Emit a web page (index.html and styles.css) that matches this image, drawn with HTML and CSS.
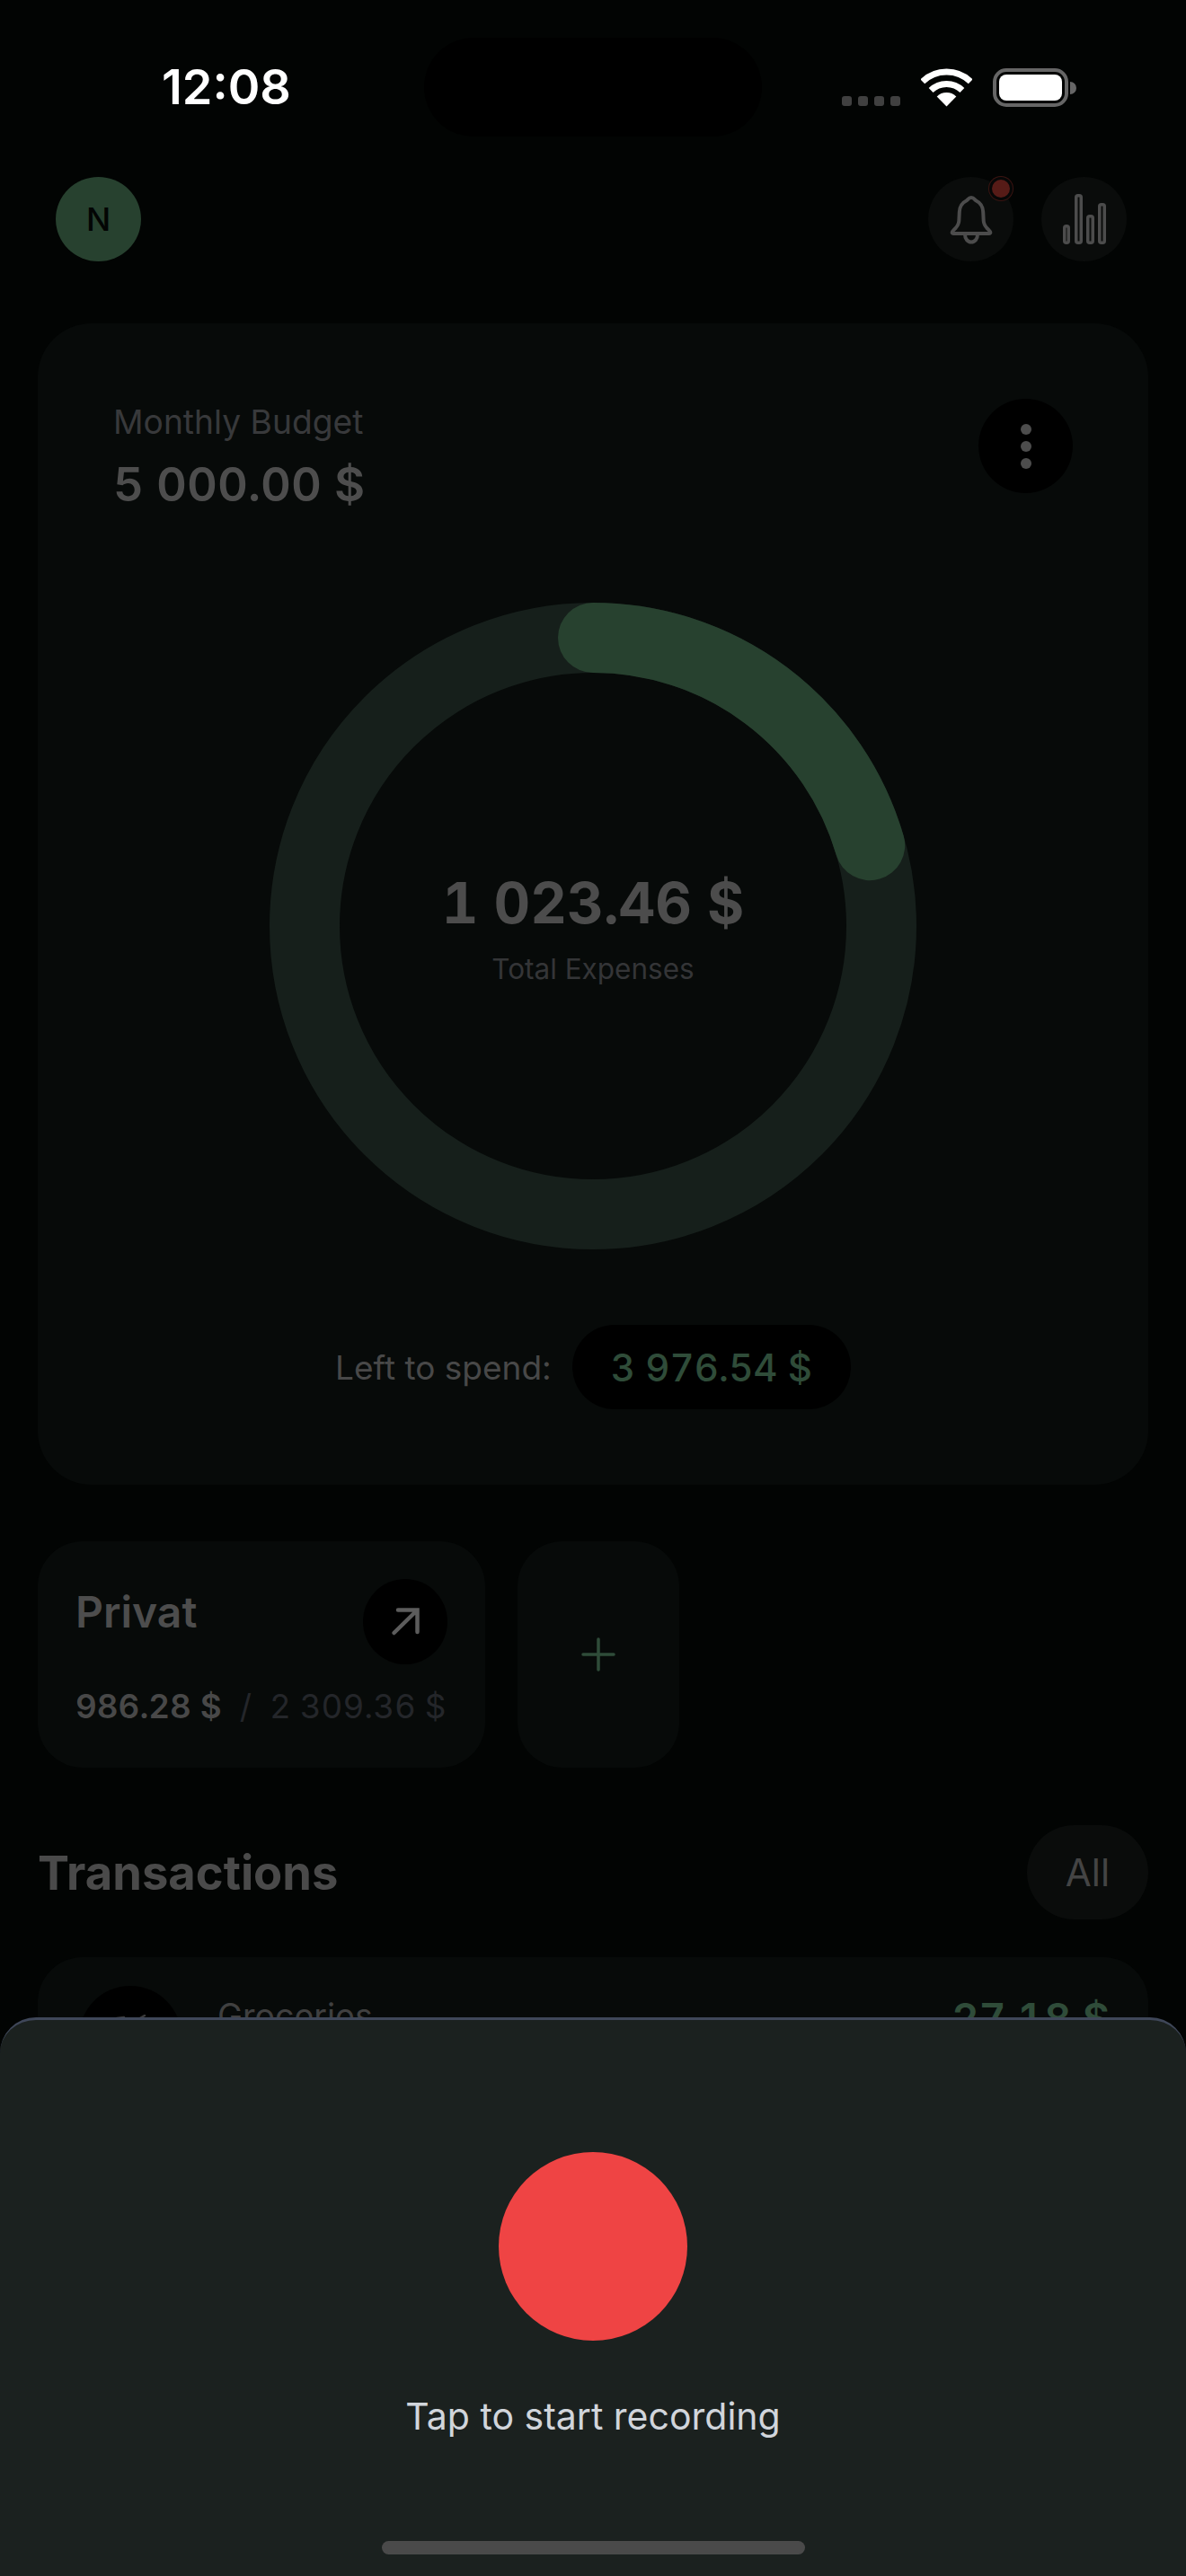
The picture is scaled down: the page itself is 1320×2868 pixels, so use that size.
FILE: index.html
```html
<!DOCTYPE html>
<html lang="en">
<head>
    <meta charset="UTF-8">
    <meta name="viewport" content="width=device-width, initial-scale=1.0">
    <title>Budget</title>
    <link rel="stylesheet" href="styles.css">
</head>
<body>
    <div class="phone">

        <div class="statusbar">
            <span class="time">12:08</span>
            <div class="island"></div>
            <div class="status-icons">
                <div class="signal"><i></i><i></i><i></i><i></i></div>
                <svg class="wifi" width="57" height="43" viewBox="0 0 57 43" fill="none" stroke="#fff" stroke-width="7">
                    <path d="M1.8 14.8A38.5 38.5 0 0 1 55.2 14.8"/>
                    <path d="M11.1 24.5A25 25 0 0 1 45.9 24.5"/>
                    <path d="M28.5 42.5L17.7 31.4A15.5 15.5 0 0 1 39.3 31.4Z" fill="#fff" stroke="none"/>
                </svg>
                <div class="battery"><div class="battery-fill"></div></div>
                <div class="battery-cap"></div>
            </div>
        </div>

        <div class="topbar">
            <div class="avatar">N</div>
            <div class="top-actions">
                <div class="round-btn">
                    <svg width="50" height="58" viewBox="0 0 50 58" fill="none" stroke="#4c4c4c" stroke-width="4" stroke-linejoin="round" stroke-linecap="round">
                        <path d="M25 5C22 5 21.500 7 19.500 8.500C14.500 11 12 15.500 11.800 21L11.300 31C11 37 7 39 4 43C3.300 44.300 4 45 5.500 45H44.500C46 45 46.700 44.300 46 43C43 39 39 37 38.700 31L38.200 21C38 15.500 35.500 11 30.500 8.500C28.500 7 28 5 25 5Z"/>
                        <path d="M18 46C18 51 21 54.500 25 54.500C29 54.500 32 51 32 46"/>
                    </svg>
                    <span class="badge"></span>
                </div>
                <div class="round-btn">
                    <svg width="50" height="57" viewBox="0 0 50 57" fill="none" stroke="#4c4c4c" stroke-width="3.500">
                        <rect x="2.750" y="35.750" width="4.500" height="18.500" rx="2"/>
                        <rect x="15.750" y="1.750" width="5.500" height="52.500" rx="2"/>
                        <rect x="28.750" y="24.750" width="5.500" height="29.500" rx="2"/>
                        <rect x="41.750" y="11.750" width="5.500" height="42.500" rx="2"/>
                    </svg>
                </div>
            </div>
        </div>

        <div class="content">
            <div class="budget-card">
                <div class="budget-head">
                    <div class="budget-info">
                        <div class="budget-label">Monthly Budget</div>
                        <div class="budget-value">5 000.00 $</div>
                    </div>
                    <div class="menu-btn"><i></i><i></i><i></i></div>
                </div>

                <div class="ring">
                    <svg width="720" height="720" viewBox="0 0 720 720" fill="none" stroke-width="78">
                        <circle cx="360" cy="360" r="321" stroke="#161f1b"/>
                        <circle class="ring-progress" cx="360" cy="360" r="321" stroke="#27412f" stroke-linecap="round" stroke-dasharray="413 2017"/>
                    </svg>
                    <div class="ring-center">
                        <div class="ring-value">1 023.46 $</div>
                        <div class="ring-label">Total Expenses</div>
                    </div>
                </div>

                <div class="left-row">
                    <span class="left-label">Left to spend:</span>
                    <span class="left-pill">3 976.54 $</span>
                </div>
            </div>

            <div class="accounts">
                <div class="account-card">
                    <div class="account-head">
                        <span class="account-name">Privat</span>
                        <div class="arrow-btn">
                            <svg width="34" height="34" viewBox="0 0 34 34" fill="none" stroke="#5c5c5c" stroke-width="4.500" stroke-linecap="round">
                                <path d="M4.500 29L30 4M9 3.500H30.500V28"/>
                            </svg>
                        </div>
                    </div>
                    <div class="account-values">
                        <span class="account-spent">986.28 $</span>
                        <span class="account-slash">/</span>
                        <span class="account-total">2 309.36 $</span>
                    </div>
                </div>
                <div class="add-card">
                    <svg width="38" height="38" viewBox="0 0 38 38" fill="none" stroke="#2f4c39" stroke-width="3.500" stroke-linecap="round">
                        <path d="M19 2V36M2 19H36"/>
                    </svg>
                </div>
            </div>

            <div class="section-head">
                <h2 class="section-title">Transactions</h2>
                <div class="all-btn">All</div>
            </div>

            <div class="transaction">
                <div class="transaction-icon">
                    <svg width="50" height="50" viewBox="0 0 50 50" fill="none" stroke="#3a3a3a" stroke-width="2.500" stroke-linecap="round">
                        <path d="M10 4L18 3M34 5L41 1M8 20H42L38 44H12Z"/>
                    </svg>
                </div>
                <div class="transaction-name">Groceries</div>
                <div class="transaction-amount">27.18 $</div>
            </div>
        </div>

        <div class="sheet">
            <div class="record-btn"></div>
            <div class="sheet-text">Tap to start recording</div>
            <div class="home-bar"></div>
        </div>

    </div>
</body>
</html>
```

FILE: styles.css
```css
* {
    box-sizing: border-box;
}

body {
    margin: 0;
    background-color: #020403;
    font-family: Inter, 'Noto Sans', sans-serif;
}

.phone {
    position: relative;
    width: 1320px;
    height: 2868px;
    overflow: hidden;
    background-color: #020403;
}

/* status bar */
.statusbar {
    display: flex;
    justify-content: space-between;
    align-items: center;
    height: 194px;
    margin-bottom: 3px;
    padding: 0 122px 0 180px;
}

.time {
    color: #fff;
    font-size: 54px;
    font-weight: 600;
    line-height: 60px;
}

.island {
    position: absolute;
    top: 42px;
    left: 472px;
    width: 376px;
    height: 110px;
    border-radius: 55px;
    background-color: #000;
}

.status-icons {
    display: flex;
    align-items: flex-end;
}

.signal {
    display: flex;
    gap: 7px;
    margin: 0 23px 1px 0;
}

.signal i {
    width: 11px;
    height: 11px;
    border-radius: 3px;
    background-color: #404040;
}

.wifi {
    margin-right: 23px;
}

.battery {
    width: 84px;
    height: 43px;
    padding: 3px;
    border: 4px solid #666;
    border-radius: 15px;
}

.battery-fill {
    width: 100%;
    height: 100%;
    border-radius: 8px;
    background-color: #fff;
}

.battery-cap {
    width: 7px;
    height: 14px;
    margin: 0 0 14px 2px;
    border-radius: 0 7px 7px 0;
    background-color: #666;
}

/* top row */
.topbar {
    display: flex;
    justify-content: space-between;
    padding: 0 66px 0 62px;
    margin-bottom: 69px;
}

.avatar {
    display: flex;
    align-items: center;
    justify-content: center;
    width: 95px;
    height: 94px;
    border-radius: 50%;
    background-color: #27412f;
    color: #030504;
    font-size: 36px;
    font-weight: 500;
}

.top-actions {
    display: flex;
    gap: 31px;
}

.round-btn {
    position: relative;
    display: flex;
    align-items: center;
    justify-content: center;
    width: 95px;
    height: 94px;
    border-radius: 50%;
    background-color: #0a0c0b;
}

.badge {
    position: absolute;
    top: 3px;
    right: 4px;
    width: 20px;
    height: 20px;
    border-radius: 50%;
    background-color: #561b17;
    box-shadow: 0 0 0 3px #060707, 0 0 0 4px #3a1411;
}

.content {
    padding: 0 42px;
}

/* budget card */
.budget-card {
    height: 1293px;
    padding: 84px;
    border-radius: 60px;
    background-color: #070a09;
}

.budget-head {
    display: flex;
    justify-content: space-between;
    height: 125px;
    margin-bottom: 102px;
}

.budget-info {
    padding-top: 4px;
}

.budget-label {
    color: #38393b;
    font-size: 37.200px;
    line-height: 44px;
}

.budget-value {
    margin-top: 17px;
    color: #4d4d4d;
    font-size: 52.500px;
    font-weight: 600;
    line-height: 60px;
    font-variant-numeric: tabular-nums;
}

.menu-btn {
    display: flex;
    flex-direction: column;
    align-items: center;
    justify-content: center;
    gap: 7px;
    width: 105px;
    height: 105px;
    border-radius: 50%;
    background-color: #000;
}

.menu-btn i {
    width: 12px;
    height: 12px;
    border-radius: 50%;
    background-color: #4d4d4d;
}

.ring {
    position: relative;
    width: 720px;
    height: 720px;
    margin: 0 auto 84px;
}

.ring-progress {
    transform: rotate(-90deg);
    transform-origin: 360px 360px;
}

.ring-center {
    position: absolute;
    inset: 0;
    display: flex;
    flex-direction: column;
    align-items: center;
    justify-content: center;
}

.ring-value {
    margin-top: 2px;
    color: #4c4c4c;
    font-size: 63px;
    font-weight: 700;
    line-height: 80px;
    font-variant-numeric: tabular-nums;
}

.ring-label {
    margin-top: 14px;
    color: #343537;
    font-size: 31.500px;
    line-height: 40px;
}

.left-row {
    display: flex;
    align-items: center;
    justify-content: center;
    gap: 23px;
}

.left-label {
    color: #484848;
    font-size: 37px;
}

.left-pill {
    display: flex;
    align-items: center;
    height: 94px;
    padding: 0 43px;
    border-radius: 47px;
    background-color: #000;
    color: #2f4c39;
    font-size: 42px;
    font-weight: 500;
    font-variant-numeric: tabular-nums;
}

/* accounts */
.accounts {
    display: flex;
    gap: 36px;
    margin-top: 63px;
}

.account-card {
    width: 498px;
    height: 252px;
    padding: 42px 42px 0;
    border-radius: 50px;
    background-color: #070a09;
}

.account-head {
    display: flex;
    justify-content: space-between;
}

.account-name {
    margin-top: 7px;
    color: #4d4d4d;
    font-size: 48px;
    font-weight: 600;
    line-height: 60px;
}

.arrow-btn {
    display: flex;
    align-items: center;
    justify-content: center;
    width: 94px;
    height: 95px;
    border-radius: 50%;
    background-color: #000;
}

.account-values {
    display: flex;
    margin-top: 25px;
    font-size: 36.800px;
    line-height: 44px;
    white-space: nowrap;
    font-variant-numeric: tabular-nums;
}

.account-spent {
    color: #484848;
    font-weight: 600;
}

.account-slash {
    margin: 0 20px 0 20px;
    color: #24262a;
}

.account-total {
    color: #24262a;
}

.add-card {
    display: flex;
    align-items: center;
    justify-content: center;
    width: 180px;
    height: 252px;
    border-radius: 50px;
    background-color: #070a09;
}

/* transactions */
.section-head {
    display: flex;
    justify-content: space-between;
    align-items: center;
    margin-top: 64px;
}

.section-title {
    margin: 0;
    color: #4a4a4a;
    font-size: 52.500px;
    font-weight: 700;
    line-height: 60px;
}

.all-btn {
    display: flex;
    align-items: center;
    justify-content: center;
    width: 135px;
    height: 105px;
    border-radius: 53px;
    background-color: #0a0c0b;
    color: #444;
    font-size: 42px;
}

.transaction {
    display: flex;
    height: 240px;
    margin-top: 42px;
    padding: 32px 43px 0 46px;
    border-radius: 50px;
    background-color: #070a09;
}

.transaction-icon {
    display: flex;
    align-items: center;
    justify-content: center;
    flex-shrink: 0;
    width: 114px;
    height: 114px;
    margin-right: 40px;
    border-radius: 50%;
    background-color: #000;
}

.transaction-name {
    flex: 1;
    margin-top: 12px;
    color: #404040;
    font-size: 37.500px;
    line-height: 44px;
}

.transaction-amount {
    margin-top: 12px;
    color: #2f4c39;
    font-size: 46.500px;
    font-weight: 600;
    line-height: 48px;
    font-variant-numeric: tabular-nums;
}

/* recording sheet */
.sheet {
    position: absolute;
    top: 2246px;
    left: 0;
    right: 0;
    bottom: 0;
    display: flex;
    flex-direction: column;
    align-items: center;
    border-top: 3px solid #3f4759;
    border-radius: 40px 40px 0 0;
    background-color: #1b211f;
}

.record-btn {
    width: 210px;
    height: 210px;
    margin-top: 147px;
    border-radius: 50%;
    background-color: #ef4444;
}

.sheet-text {
    margin-top: 59px;
    color: #d1d5db;
    font-size: 41px;
    line-height: 50px;
}

.home-bar {
    width: 471px;
    height: 15px;
    margin-top: auto;
    margin-bottom: 24px;
    border-radius: 8px;
    background-color: #4a4a4a;
}
```
